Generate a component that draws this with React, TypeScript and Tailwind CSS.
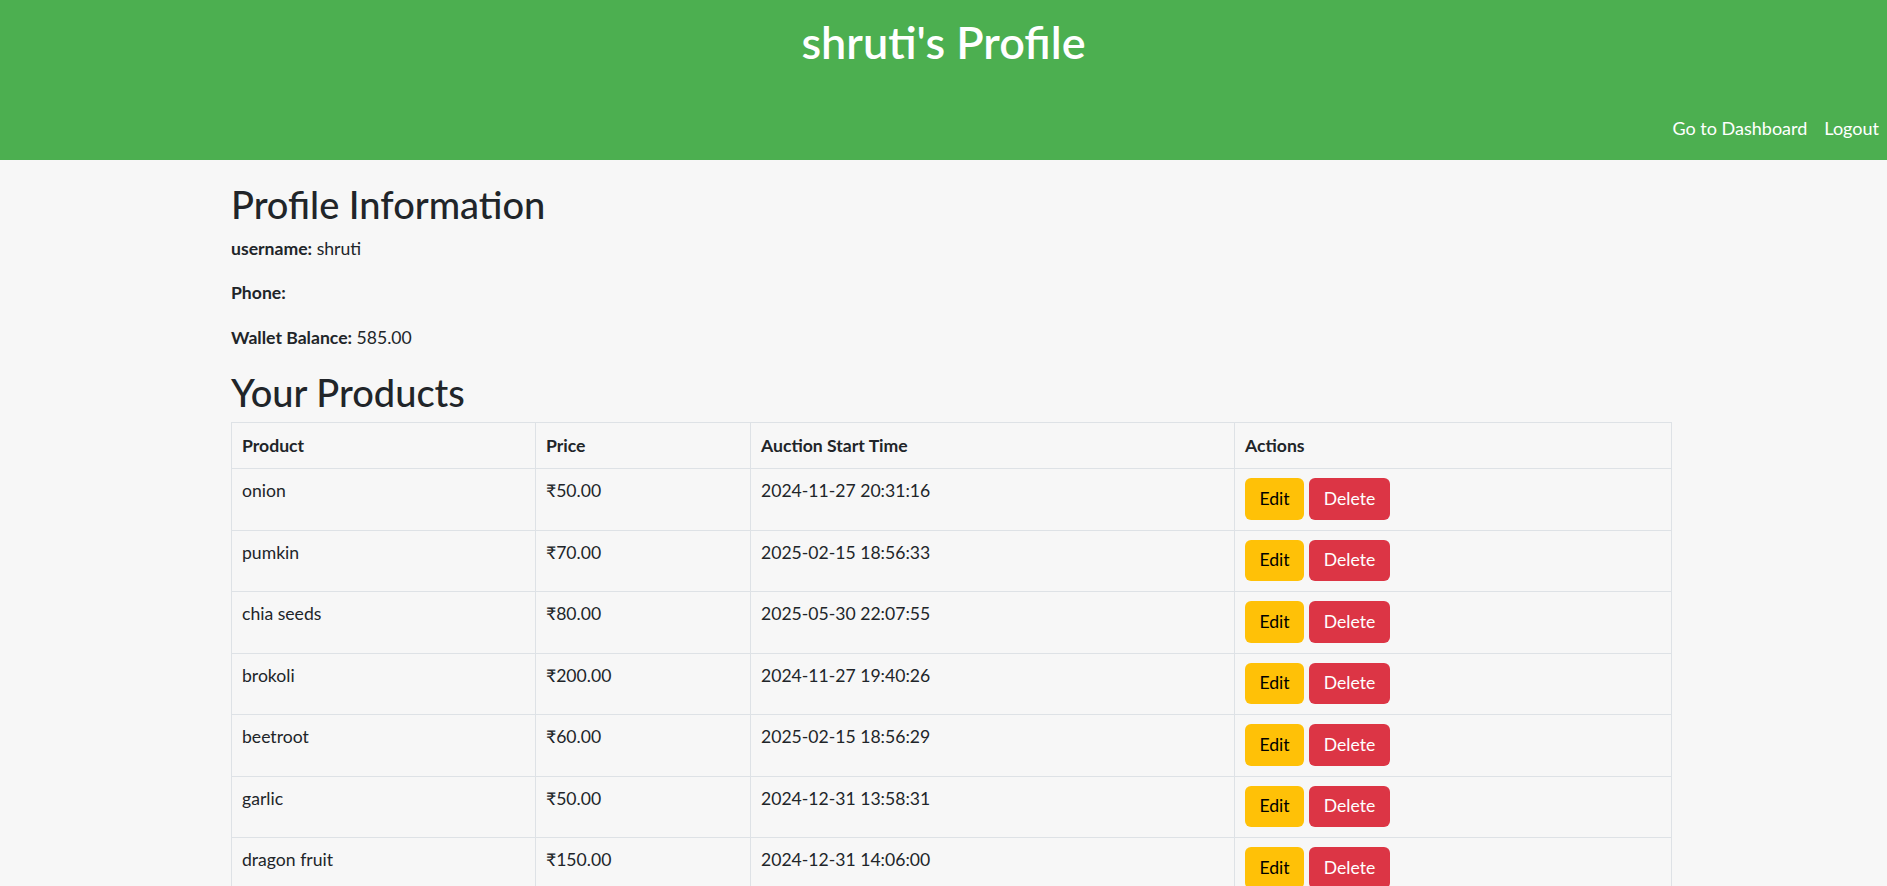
import React from 'react'

type Product = { name: string; price: string; start: string }

const products: Product[] = [
  { name: 'onion', price: '₹50.00', start: '2024-11-27 20:31:16' },
  { name: 'pumkin', price: '₹70.00', start: '2025-02-15 18:56:33' },
  { name: 'chia seeds', price: '₹80.00', start: '2025-05-30 22:07:55' },
  { name: 'brokoli', price: '₹200.00', start: '2024-11-27 19:40:26' },
  { name: 'beetroot', price: '₹60.00', start: '2025-02-15 18:56:29' },
  { name: 'garlic', price: '₹50.00', start: '2024-12-31 13:58:31' },
  { name: 'dragon fruit', price: '₹150.00', start: '2024-12-31 14:06:00' },
  { name: 'carrot', price: '₹40.00', start: '2025-01-10 10:15:00' },
]

export default function App() {
  return (
    <div className="min-h-screen bg-[#f7f7f7] text-[#212529] font-['Lato','Noto_Sans',sans-serif]">
      {/* Top banner */}
      <header className="h-[160px] flex flex-col bg-[#4caf50] text-white pt-[15px]">
        <h1 className="text-center text-[45px] leading-[54px] font-semibold">shruti's Profile</h1>
        <nav className="mt-auto pb-[20px] pr-[8px] flex justify-end gap-[17px] text-[18px] leading-[24px]">
          <a href="#" className="text-white no-underline">Go to Dashboard</a>
          <a href="#" className="text-white no-underline">Logout</a>
        </nav>
      </header>

      <main className="ml-[231px] w-[1440px] text-[17.6px]">
        <h2 className="mt-[21px] text-[38px] leading-[46px] font-medium">Profile Information</h2>
        <p className="mt-[9px] leading-[26px]">
          <strong className="font-bold">username:</strong> shruti
        </p>
        <p className="mt-[18px] leading-[26px]">
          <strong className="font-bold">Phone:</strong>
        </p>
        <p className="mt-[19px] leading-[26px]">
          <strong className="font-bold">Wallet Balance:</strong> 585.00
        </p>

        <h2 className="mt-[18px] text-[38px] leading-[46px] font-medium">Your Products</h2>

        <table className="mt-[7px] w-full table-fixed border-collapse border border-[#dee2e6]">
          <colgroup>
            <col className="w-[304px]" />
            <col className="w-[215px]" />
            <col className="w-[484px]" />
            <col className="w-[437px]" />
          </colgroup>
          <thead>
            <tr>
              {['Product', 'Price', 'Auction Start Time', 'Actions'].map((h) => (
                <th key={h} className="border border-[#dee2e6] px-[10px] py-[9.5px] text-left font-bold leading-[26px]">
                  {h}
                </th>
              ))}
            </tr>
          </thead>
          <tbody>
            {products.map((p) => (
              <tr key={p.name}>
                <td className="border border-[#dee2e6] px-[10px] pt-[9px] pb-[10px] align-top leading-[26px]">{p.name}</td>
                <td className="border border-[#dee2e6] px-[10px] pt-[9px] pb-[10px] align-top leading-[26px]">{p.price}</td>
                <td className="border border-[#dee2e6] px-[10px] pt-[9px] pb-[10px] align-top leading-[26px]">{p.start}</td>
                <td className="border border-[#dee2e6] px-[10px] pt-[9px] pb-[10px] align-top">
                  <div className="flex gap-[5px]">
                    <button className="h-[41.5px] w-[59px] rounded-[6px] bg-[#ffc107] text-black leading-[26px]">Edit</button>
                    <button className="h-[41.5px] w-[81px] rounded-[6px] bg-[#dc3545] text-white leading-[26px]">Delete</button>
                  </div>
                </td>
              </tr>
            ))}
          </tbody>
        </table>
      </main>
    </div>
  )
}
